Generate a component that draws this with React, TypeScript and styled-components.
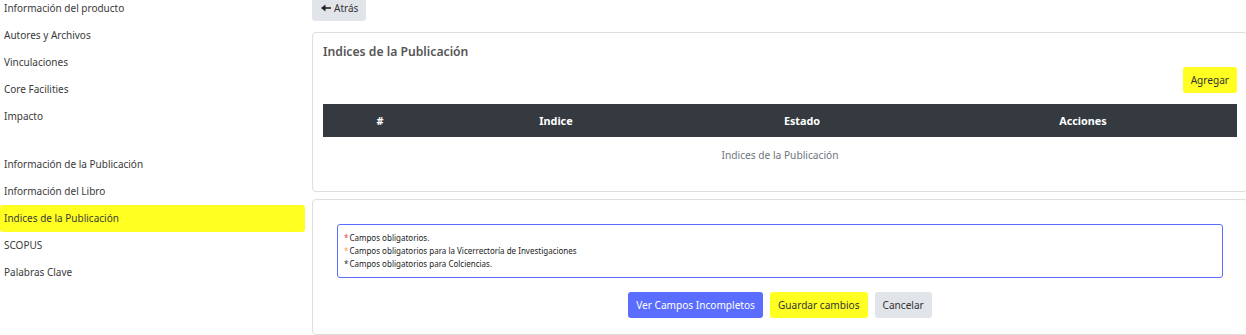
import React, { FC } from 'react';
import styled, { createGlobalStyle } from 'styled-components';

const GlobalStyle = createGlobalStyle`
  html, body {
    margin: 0;
    padding: 0;
    background: #fff;
    overflow: hidden;
  }
  body {
    font-family: 'Noto Sans', 'Open Sans', Arial, sans-serif;
    color: #333;
  }
`;

const Page = styled.div`
  display: flex;
  width: 1246px;
  margin-top: -5px;
`;

const Sidebar = styled.nav`
  width: 305px;
  flex-shrink: 0;
  display: flex;
  flex-direction: column;
`;

const NavItem = styled.div<{ $active?: boolean }>`
  height: 27px;
  line-height: 27px;
  padding-left: 4px;
  font-size: 10px;
  color: #3a3a3a;
  border-radius: 3px;
  background: ${(p) => (p.$active ? '#ffff22' : 'transparent')};
`;

const NavSpacer = styled.div`
  height: 21px;
`;

const Main = styled.main`
  flex: 1;
  margin-left: 7px;
  margin-right: -2px;
  display: flex;
  flex-direction: column;
  align-items: flex-start;
`;

const Button = styled.button<{ $variant: 'light' | 'yellow' | 'blue' }>`
  height: 26px;
  padding: 0 8px;
  border: none;
  border-radius: 3px;
  font-family: inherit;
  font-size: 10.1px;
  cursor: pointer;
  display: inline-flex;
  align-items: center;
  gap: 3px;
  background: ${(p) =>
    p.$variant === 'yellow' ? '#ffff22' : p.$variant === 'blue' ? '#5a6dff' : '#e1e4e8'};
  color: ${(p) => (p.$variant === 'blue' ? '#fff' : '#333')};
`;

const BackButton = styled(Button)`
  font-size: 10px;
  padding: 0 8px 0 9px;
`;

const Card = styled.section<{ $top: number }>`
  align-self: stretch;
  margin-top: ${(p) => p.$top}px;
  border: 1px solid #dedede;
  border-radius: 4px;
  background: #fff;
`;

const ListCard = styled(Card)`
  padding: 10px 10px 19px 10px;
  display: flex;
  flex-direction: column;
`;

const Title = styled.h5`
  margin: 0;
  height: 17px;
  line-height: 17px;
  font-size: 12.2px;
  font-weight: 600;
  color: #555;
`;

const ActionRow = styled.div`
  display: flex;
  justify-content: flex-end;
  margin-top: 7px;
`;

const Table = styled.table`
  margin-top: 11px;
  width: 100%;
  border-collapse: collapse;
  table-layout: fixed;
`;

const Th = styled.th<{ $w: number }>`
  width: ${(p) => p.$w}px;
  height: 33px;
  padding: 0;
  background: #343a40;
  color: #fff;
  font-size: 10.8px;
  font-weight: 700;
  text-align: center;
`;

const EmptyCell = styled.td`
  height: 33px;
  padding-bottom: 1px;
  text-align: center;
  font-size: 10.2px;
  color: #6c757d;
`;

const FormCard = styled(Card)`
  padding: 24px 24px 16px 24px;
  display: flex;
  flex-direction: column;
  align-items: stretch;
`;

const Legend = styled.div`
  border: 1px solid #5a6dff;
  border-radius: 3px;
  padding: 6px 6px 7px 6px;
  font-size: 8px;
  line-height: 13px;
  color: #222;
`;

const Star = styled.span<{ $color: string }>`
  color: ${(p) => p.$color};
  margin-right: 1px;
`;

const Footer = styled.div`
  display: flex;
  justify-content: center;
  gap: 7px;
  margin-top: 14px;
`;

const ArrowLeft: FC = () => (
  <svg width='10' height='8' viewBox='0 0 10 8'>
    <path d='M3.5 4 H10' stroke='#222' strokeWidth='1.6' />
    <path d='M0 4 L4.5 0.5 V7.5 Z' fill='#222' />
  </svg>
);

const App: FC = () => {
  const firstGroup = ['Información del producto', 'Autores y Archivos', 'Vinculaciones', 'Core Facilities', 'Impacto'];
  const secondGroup = ['Información de la Publicación', 'Información del Libro', 'Indices de la Publicación', 'SCOPUS', 'Palabras Clave'];
  const columns: [string, number][] = [
    ['#', 114],
    ['Indice', 238],
    ['Estado', 254],
    ['Acciones', 308],
  ];

  return (
    <>
      <GlobalStyle />
      <Page>
        <Sidebar>
          {firstGroup.map((item) => (
            <NavItem key={item}>{item}</NavItem>
          ))}
          <NavSpacer />
          {secondGroup.map((item) => (
            <NavItem key={item} $active={item === 'Indices de la Publicación'}>
              {item}
            </NavItem>
          ))}
        </Sidebar>
        <Main>
          <BackButton $variant='light'>
            <ArrowLeft />
            Atrás
          </BackButton>
          <ListCard $top={11}>
            <Title>Indices de la Publicación</Title>
            <ActionRow>
              <Button $variant='yellow'>Agregar</Button>
            </ActionRow>
            <Table>
              <thead>
                <tr>
                  {columns.map(([label, w]) => (
                    <Th key={label} $w={w}>
                      {label}
                    </Th>
                  ))}
                </tr>
              </thead>
              <tbody>
                <tr>
                  <EmptyCell colSpan={4}>Indices de la Publicación</EmptyCell>
                </tr>
              </tbody>
            </Table>
          </ListCard>
          <FormCard $top={7}>
            <Legend>
              <div>
                <Star $color='#e8414a'>*</Star>Campos obligatorios.
              </div>
              <div>
                <Star $color='#f3a55a'>*</Star>Campos obligatorios para la Vicerrectoría de Investigaciones
              </div>
              <div>
                <Star $color='#333'>*</Star>Campos obligatorios para Colciencias.
              </div>
            </Legend>
            <Footer>
              <Button $variant='blue'>Ver Campos Incompletos</Button>
              <Button $variant='yellow'>Guardar cambios</Button>
              <Button $variant='light'>Cancelar</Button>
            </Footer>
          </FormCard>
        </Main>
      </Page>
    </>
  );
};

export default App;
